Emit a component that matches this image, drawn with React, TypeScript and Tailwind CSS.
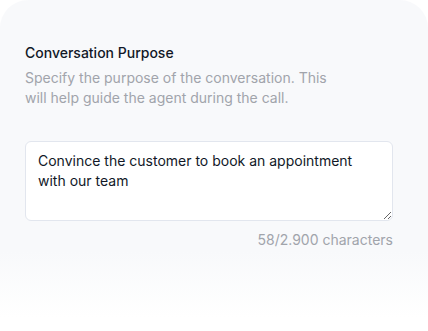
import { useState } from 'react';

const MAX = 2900;

const App = () => {
  const [purpose, setPurpose] = useState('Convince the customer to book an appointment with our team');

  return (
    <div className="w-full h-[331px] bg-white overflow-hidden font-['Inter',sans-serif]">
      <section className="h-full rounded-t-[28px] bg-[linear-gradient(to_bottom,#f8f9fb_0%,#f8f9fb_76%,#ffffff_96%)] px-[25px] pt-[43px]">
        <h3 className="text-[14px] leading-5 font-medium text-[#111827]">Conversation Purpose</h3>
        <p className="mt-[5px] max-w-[310px] text-[14px] leading-5 text-[#a1a4ab]">
          Specify the purpose of the conversation. This will help guide the agent during the call.
        </p>

        <div className="mt-[33px] w-[368px]">
          <textarea
            value={purpose}
            onChange={(e) => setPurpose(e.target.value)}
            maxLength={MAX}
            className="block w-full h-[80px] rounded-[6px] border border-[#e2e6ee] bg-white px-3 pt-[9px] text-[14px] leading-5 text-[#111827] outline-none"
          />
          <div className="mt-[9px] text-right text-[14px] leading-5 text-[#a1a4ab]">
            {purpose.length}/2.900 characters
          </div>
        </div>
      </section>
    </div>
  );
};

export default App;
